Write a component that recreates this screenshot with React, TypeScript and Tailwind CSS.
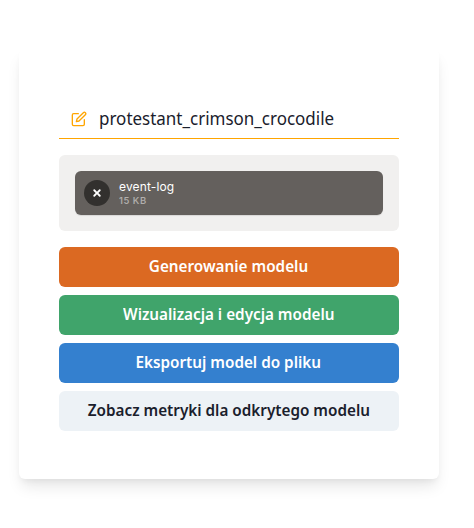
import React from "react";

const actions = [
  { label: "Generowanie modelu", tone: "bg-[#db6922] text-white" },
  { label: "Wizualizacja i edycja modelu", tone: "bg-[#40a46b] text-white" },
  { label: "Eksportuj model do pliku", tone: "bg-[#3480cf] text-white" },
  { label: "Zobacz metryki dla odkrytego modelu", tone: "bg-[#edf2f6] text-[#1a202c]" },
];

export default function App() {
  return (
    <div className="h-[528px] w-[474px] overflow-hidden bg-white pl-[19px] pt-[49px] font-['Noto_Sans',sans-serif] text-[#1a202c]">
      <main className="h-[430px] w-[420px] rounded-md bg-white px-10 pt-[50px] shadow-[0_10px_15px_-3px_rgba(0,0,0,0.1),0_4px_6px_-2px_rgba(0,0,0,0.05)]">
        <div className="flex h-10 items-center border-b border-[#ffa500] pl-3">
          <svg className="size-4 text-[#ffa500]" viewBox="0 0 24 24" fill="none" stroke="currentColor" strokeWidth="2" strokeLinecap="round" strokeLinejoin="round">
            <path d="M11 4H4a2 2 0 0 0-2 2v14a2 2 0 0 0 2 2h14a2 2 0 0 0 2-2v-7" />
            <path d="M18.5 2.5a2.121 2.121 0 0 1 3 3L12 15l-4 1 1-4 9.5-9.5z" />
          </svg>
          <span className="ml-[11.5px] origin-left scale-x-[0.943] pb-px text-[18px] leading-6">protestant_crimson_crocodile</span>
        </div>
        <div className="mt-4 h-[76px] rounded-md bg-[#f1f0ef] p-4">
          <div className="flex h-11 items-center rounded-md bg-[#64605d] pl-[9px] text-white shadow-[0_1px_1px_rgba(0,0,0,0.1)]">
            <button className="flex size-[26px] items-center justify-center rounded-full bg-[#32302e]">
              <svg className="size-6" viewBox="0 0 26 26" fill="currentColor">
                <path d="M11.586 13l-2.293 2.293a1 1 0 0 0 1.414 1.414L13 14.414l2.293 2.293a1 1 0 0 0 1.414-1.414L14.414 13l2.293-2.293a1 1 0 0 0-1.414-1.414L13 11.586l-2.293-2.293a1 1 0 0 0-1.414 1.414L11.586 13z" />
              </svg>
            </button>
            <div className="ml-[9px] pt-px font-['Inter',sans-serif]">
              <div className="text-[12px] leading-[14px] tracking-[0.15px]">event-log</div>
              <div className="text-[9.5px] leading-[13px] font-medium tracking-[0.5px] opacity-50">15 KB</div>
            </div>
          </div>
        </div>
        <div className="mt-4 flex flex-col gap-2">
          {actions.map(({ label, tone }) => (
            <button key={label} className={`flex h-10 items-center justify-center rounded-md pr-px pb-[2px] text-base leading-5 font-semibold ${tone}`}>
              <span className="scale-x-[0.954]">{label}</span>
            </button>
          ))}
        </div>
      </main>
    </div>
  );
}
